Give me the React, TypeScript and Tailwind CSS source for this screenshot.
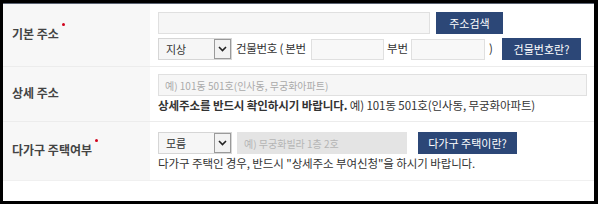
import React from "react";

const font = { fontFamily: '"Noto Sans CJK KR", "Noto Sans", sans-serif' };

function Select({ value }: { value: string }) {
  return (
    <div className="flex h-[22px] w-[74px] items-center border border-[#d6d6d6] bg-[#f6f6f6]">
      <span className="flex-1 pl-[7px] text-[11px] text-[#333]">{value}</span>
      <span className="flex h-[20px] w-[17px] items-center justify-center border border-[#9a9a9a] bg-[#f2f2f2]">
        <svg width="9" height="6" viewBox="0 0 9 6">
          <path d="M1 1 L4.5 4.5 L8 1" fill="none" stroke="#222" strokeWidth="1.6" />
        </svg>
      </span>
    </div>
  );
}

function Btn({ children, w }: { children: React.ReactNode; w: string }) {
  return (
    <div className={`flex h-[22px] ${w} items-center justify-center bg-[#2c4777] text-[11px] text-white`}>{children}</div>
  );
}

function Label({ text, req }: { text: string; req?: boolean }) {
  return (
    <div className="flex w-[147px] shrink-0 items-center bg-[#f7f7f7] pb-[3px] pl-[9px] text-[12px] font-bold text-[#444]">
      <span className="relative">
        {text}
        {req && <span className="absolute -right-[6px] -top-[2px] h-[3px] w-[3px] rounded-full bg-[#d0021b]" />}
      </span>
    </div>
  );
}

export default function App() {
  return (
    <div className="h-[204px] w-[598px] bg-black pb-[3px] pl-[3px] pr-[4px] pt-[3px]" style={font}>
      <div className="flex h-full flex-col border-t border-[#5b6372] bg-white">
        <div className="flex h-[63px] border-b border-[#ececec]">
          <Label text="기본 주소" req />
          <div className="flex flex-col gap-[4px] pl-[8px] pt-[8px]">
            <div className="flex items-center gap-[6px]">
              <div className="h-[22px] w-[272px] border border-[#e0e0e0] bg-[#f6f6f6]" />
              <Btn w="w-[67px]">주소검색</Btn>
            </div>
            <div className="flex items-center text-[11.5px] text-[#333]">
              <Select value="지상" />
              <span className="w-[79px] shrink-0 whitespace-nowrap pl-[4px] tracking-[-0.3px]">건물번호 ( 본번</span>
              <div className="h-[21px] w-[73px] shrink-0 border border-[#e0e0e0] bg-[#f8f8f8]" />
              <span className="w-[27px] shrink-0 pl-[3px]">부번</span>
              <div className="h-[21px] w-[74px] shrink-0 border border-[#e0e0e0] bg-[#f8f8f8]" />
              <span className="w-[17px] shrink-0 pl-[4px]">)</span>
              <Btn w="w-[79px]">건물번호란?</Btn>
            </div>
          </div>
        </div>
        <div className="flex h-[55px] border-b border-[#ececec]">
          <Label text="상세 주소" />
          <div className="flex flex-col pl-[8px] pt-[7px]">
            <div className="flex h-[22px] w-[429px] items-center border border-[#e0e0e0] bg-[#f6f6f6] pl-[6px] text-[10px] text-[#aaa]">
              예) 101동 501호(인사동, 무궁화아파트)
            </div>
            <div className="mt-[1px] text-[11.5px] tracking-[-0.1px] text-[#333]">
              <span className="font-bold">상세주소를 반드시 확인하시기 바랍니다.</span> 예) 101동 501호(인사동, 무궁화아파트)
            </div>
          </div>
        </div>
        <div className="flex h-[59px] border-b border-[#f0f0f0]">
          <Label text="다가구 주택여부" req />
          <div className="flex flex-col pl-[8px] pt-[10px]">
            <div className="flex items-center">
              <Select value="모름" />
              <div className="ml-[5px] flex h-[22px] w-[170px] items-center bg-[#e4e4e4] pl-[7px] text-[10px] text-[#b5b5b5]">
                예) 무궁화빌라 1층 2호
              </div>
              <div className="ml-[11px]">
                <Btn w="w-[99px]">다가구 주택이란?</Btn>
              </div>
            </div>
            <div className="mt-[1px] text-[11.5px] tracking-[-0.1px] text-[#333]">
              다가구 주택인 경우, 반드시 "상세주소 부여신청"을 하시기 바랍니다.
            </div>
          </div>
        </div>
        <div className="flex-1" />
      </div>
    </div>
  );
}
